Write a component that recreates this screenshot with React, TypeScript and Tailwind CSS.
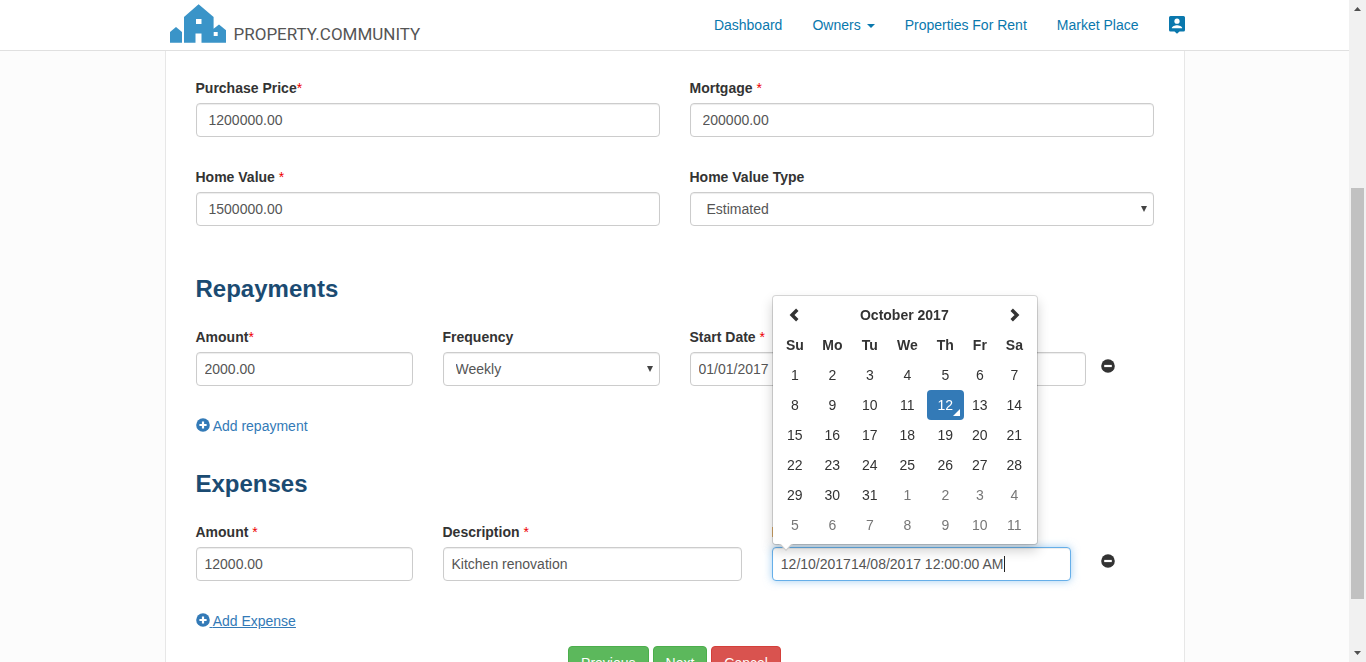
import { useState } from "react";
import type { ReactNode } from "react";

const FIELD =
  "block h-[34px] w-full rounded border border-[#ccc] bg-white text-sm text-[#555] shadow-[inset_0_1px_1px_rgba(0,0,0,0.075)] outline-none focus:border-[#66afe9] focus:shadow-[inset_0_1px_1px_rgba(0,0,0,0.075),0_0_8px_rgba(102,175,233,0.6)]";

function Label({ id, text, mark }: { id: string; text: string; mark?: string }) {
  return (
    <label htmlFor={id} className="mb-[5px] block text-sm/5 font-bold whitespace-pre">
      {text}
      {mark && <span className="font-normal text-[#e00]">{mark}</span>}
    </label>
  );
}

function TextField({
  id,
  label,
  mark,
  value,
  roomy,
  className = "",
}: {
  id: string;
  label: string;
  mark?: string;
  value: string;
  roomy?: boolean;
  className?: string;
}) {
  return (
    <div className={className}>
      <Label id={id} text={label} mark={mark} />
      <input id={id} defaultValue={value} className={`${FIELD} ${roomy ? "px-3" : "px-2"}`} />
    </div>
  );
}

function SelectField({
  id,
  label,
  options,
  pad,
  className = "",
}: {
  id: string;
  label: string;
  options: string[];
  pad: string;
  className?: string;
}) {
  return (
    <div className={className}>
      <Label id={id} text={label} />
      <div className="relative">
        <select id={id} className={`${FIELD} appearance-none ${pad}`}>
          {options.map((o) => (
            <option key={o}>{o}</option>
          ))}
        </select>
        <svg className="pointer-events-none absolute top-[14px] right-1.5 h-1.5 w-2" viewBox="0 0 8 6">
          <path d="M1 0h6L4 6z" fill="#444" />
        </svg>
      </div>
    </div>
  );
}

function RoundIcon({ plus }: { plus?: boolean }) {
  return (
    <svg className="h-[14px] w-[14px]" viewBox="0 0 14 14">
      <circle cx="7" cy="7" r="6.8" fill="currentColor" />
      <path d={plus ? "M3.4 7h7.2M7 3.4v7.2" : "M3.2 7h7.6"} stroke="#fff" strokeWidth="2.2" />
    </svg>
  );
}

function RemoveButton({ label }: { label: string }) {
  return (
    <button aria-label={label} className="mt-8 flex items-start">
      <RoundIcon />
    </button>
  );
}

function AddLink({ children, active }: { children: ReactNode; active?: boolean }) {
  return (
    <a
      href="#"
      className={`mt-[30px] flex w-fit text-sm/5 text-[#337ab7] hover:underline ${active ? "underline" : ""}`}
    >
      <span className="mt-0.5">
        <RoundIcon plus />
      </span>
      <span className="whitespace-pre"> {children}</span>
    </a>
  );
}

function SectionTitle({ children }: { children: ReactNode }) {
  return <h2 className="mb-[25px] text-2xl/[26px] font-bold text-[#1b4b72]">{children}</h2>;
}

function Chevron({ flip }: { flip?: boolean }) {
  return (
    <svg className="mx-auto h-4 w-4" viewBox="0 0 14 14">
      <path
        d={flip ? "M5 2.4l4.6 4.6L5 11.6" : "M9 2.4L4.4 7 9 11.6"}
        fill="none"
        stroke="#333"
        strokeWidth="3"
      />
    </svg>
  );
}

const WEEKDAYS = [
  { name: "Su", width: "w-[36px]" },
  { name: "Mo", width: "w-[39px]" },
  { name: "Tu", width: "w-[36px]" },
  { name: "We", width: "w-[39px]" },
  { name: "Th", width: "w-[37px]" },
  { name: "Fr", width: "w-[32px]" },
  { name: "Sa", width: "w-[37px]" },
];

const DAYS_IN_MONTH = 31;

function Calendar() {
  const [selected, setSelected] = useState(12);
  const weeks = [0, 1, 2, 3, 4, 5];
  return (
    <div className="absolute bottom-full left-0 z-10 mb-0.5 w-[266px] rounded border border-black/15 bg-white bg-clip-padding p-1 shadow-[0_6px_12px_rgba(0,0,0,0.175)]">
      <table className="w-full table-fixed border-collapse text-center text-sm/5">
        <colgroup>
          {WEEKDAYS.map((d) => (
            <col key={d.name} className={d.width} />
          ))}
        </colgroup>
        <thead>
          <tr className="h-[30px]">
            <th>
              <button aria-label="Previous month" className="block w-full">
                <Chevron />
              </button>
            </th>
            <th colSpan={5}>October 2017</th>
            <th>
              <button aria-label="Next month" className="block w-full">
                <Chevron flip />
              </button>
            </th>
          </tr>
          <tr className="h-[30px]">
            {WEEKDAYS.map((d) => (
              <th key={d.name}>{d.name}</th>
            ))}
          </tr>
        </thead>
        <tbody>
          {weeks.map((w) => (
            <tr key={w} className="h-[30px]">
              {WEEKDAYS.map((d, i) => {
                const n = w * 7 + i + 1;
                const outside = n > DAYS_IN_MONTH;
                const active = n === selected;
                return (
                  <td key={d.name} className="p-0">
                    <button
                      onClick={() => !outside && setSelected(n)}
                      className={`relative block h-[30px] w-full rounded ${
                        active ? "bg-[#337ab7] text-white" : outside ? "text-[#777]" : ""
                      }`}
                    >
                      {outside ? n - DAYS_IN_MONTH : n}
                      {n === 12 && (
                        <svg className="absolute right-1 bottom-1 h-[7px] w-[7px]" viewBox="0 0 7 7">
                          <path d="M7 0v7H0z" fill="#fff" />
                        </svg>
                      )}
                    </button>
                  </td>
                );
              })}
            </tr>
          ))}
        </tbody>
      </table>
      <svg className="absolute top-full left-1.5 h-[7px] w-[14px]" viewBox="0 0 14 7">
        <path d="M0 0l7 7 7-7z" fill="#ccc" />
        <path d="M1 -1l6 6.6L13 -1z" fill="#fff" />
      </svg>
    </div>
  );
}

function DateField() {
  const [untouched, setUntouched] = useState(true);
  return (
    <div className="col-span-4">
      <Label id="date" text="Date" mark=" *" />
      <div className="relative">
        <input
          id="date"
          autoFocus
          defaultValue="12/10/201714/08/2017 12:00:00 AM"
          onKeyDown={() => setUntouched(false)}
          onMouseDown={() => setUntouched(false)}
          onBlur={() => setUntouched(false)}
          className={`${FIELD} px-2 ${untouched ? "caret-transparent" : ""}`}
        />
        {untouched && <span className="absolute top-[9px] left-[232px] h-4 w-px bg-[#222]" />}
        <Calendar />
      </div>
    </div>
  );
}

function Logo() {
  return (
    <a href="#" aria-label="Property Community" className="flex items-end pb-0.5 pl-[5px]">
      <svg className="h-10 w-[57px]" viewBox="170 4 57 40">
        <path
          fillRule="evenodd"
          fill="#3a94c8"
          d="M170 42.7V32l6-5 6 5v10.7zM184 42.7V17l14.6-12.8L213.600 17v11.800l5.400-4.200 7 5.600v12.500H201.500V33.500h-6v9.200zM196 19v5h5.500v-5zM213.700 32v4h4v-4z"
        />
      </svg>
      <span className="ml-[7px] font-[Roboto,'Liberation_Sans',sans-serif] text-[17px]/5 text-[#555]">
        PROPERTY.COMMUNITY
      </span>
    </a>
  );
}

function Header() {
  return (
    <header className="border-b border-[#e0e0e0] bg-white">
      <div className="mx-auto flex h-[50px] max-w-[1020px] items-center justify-between">
        <Logo />
        <nav className="flex items-center gap-[30px] text-sm/5 text-[#0a78ad]">
          <a href="#">Dashboard</a>
          <a href="#" className="flex items-center gap-1.5">
            Owners
            <svg className="mt-0.5 h-1 w-2" viewBox="0 0 8 4">
              <path d="M0 0h8L4 4z" fill="currentColor" />
            </svg>
          </a>
          <a href="#">Properties For Rent</a>
          <a href="#">Market Place</a>
          <a href="#" aria-label="Account">
            <svg className="h-[18px] w-4" viewBox="0 0 16 18">
              <path
                fill="currentColor"
                d="M1.500 0h13A1.500 1.500 0 0 1 16 1.500v12.500a1.500 1.500 0 0 1-1.500 1.500H10.500L8 17.800 5.500 15.500h-4A1.500 1.500 0 0 1 0 14V1.500A1.500 1.500 0 0 1 1.500 0z"
              />
              <circle cx="8" cy="5.200" r="2.600" fill="#fff" />
              <path d="M2.800 12.200c0-2 3.200-3 5.200-3s5.200 1 5.200 3z" fill="#fff" />
            </svg>
          </a>
        </nav>
      </div>
    </header>
  );
}

function ScrollBar() {
  return (
    <div aria-hidden="true" className="flex w-[17px] shrink-0 flex-col items-center bg-[#f1f1f1]">
      <svg className="h-[17px] w-[17px] shrink-0" viewBox="0 0 17 17">
        <path d="M5 11h7L8.500 7z" fill="#505050" />
      </svg>
      <div className="grow-[171]" />
      <div className="w-[13px] grow-[411] bg-[#c1c1c1]" />
      <div className="grow-[46]" />
      <svg className="h-[17px] w-[17px] shrink-0" viewBox="0 0 17 17">
        <path d="M5 6h7l-3.500 4z" fill="#505050" />
      </svg>
    </div>
  );
}

export default function App() {
  return (
    <div className="flex h-screen bg-[#fcfcfc] font-['Liberation_Sans',Arial,sans-serif] text-[#333]">
      <div className="flex min-w-0 grow flex-col overflow-hidden">
        <Header />
        <main className="mx-auto w-full max-w-[1020px] grow border-x border-[#e7e7e7] bg-white px-[30px] pt-[27px]">
          <div className="grid grid-cols-2 gap-[30px]">
            <TextField id="price" label="Purchase Price" mark="*" value="1200000.00" roomy />
            <TextField id="mortgage" label="Mortgage" mark=" *" value="200000.00" roomy />
            <TextField id="value" label="Home Value" mark=" *" value="1500000.00" roomy />
            <SelectField id="type" label="Home Value Type" options={["Estimated", "Registered"]} pad="px-4" />
          </div>

          <section className="mt-[50px]">
            <SectionTitle>Repayments</SectionTitle>
            <div className="grid grid-cols-12 gap-[30px]">
              <TextField id="repay-amount" label="Amount" mark="*" value="2000.00" className="col-span-3" />
              <SelectField
                id="frequency"
                label="Frequency"
                options={["Weekly", "Fortnightly", "Monthly"]}
                pad="px-3"
                className="col-span-3"
              />
              <TextField
                id="start"
                label="Start Date"
                mark=" *"
                value="01/01/2017"
                className="col-span-5 -mr-[15px]"
              />
              <RemoveButton label="Remove repayment" />
            </div>
            <AddLink>Add repayment</AddLink>
          </section>

          <section className="mt-[35px]">
            <SectionTitle>Expenses</SectionTitle>
            <div className="grid grid-cols-12 gap-[30px]">
              <TextField id="exp-amount" label="Amount" mark=" *" value="12000.00" className="col-span-3" />
              <TextField
                id="description"
                label="Description"
                mark=" *"
                value="Kitchen renovation"
                className="col-span-4"
              />
              <DateField />
              <RemoveButton label="Remove expense" />
            </div>
            <AddLink active>Add Expense</AddLink>
          </section>

          <div className="mt-[15px] flex justify-center gap-1 text-sm/5 text-white">
            <button className="rounded border border-[#4cae4c] bg-[#5cb85c] px-3 py-1.5">Previous</button>
            <button className="rounded border border-[#4cae4c] bg-[#5cb85c] px-3 py-1.5">Next</button>
            <button className="rounded border border-[#d43f3a] bg-[#d9534f] px-3 py-1.5">Cancel</button>
          </div>
        </main>
      </div>
      <ScrollBar />
    </div>
  );
}
